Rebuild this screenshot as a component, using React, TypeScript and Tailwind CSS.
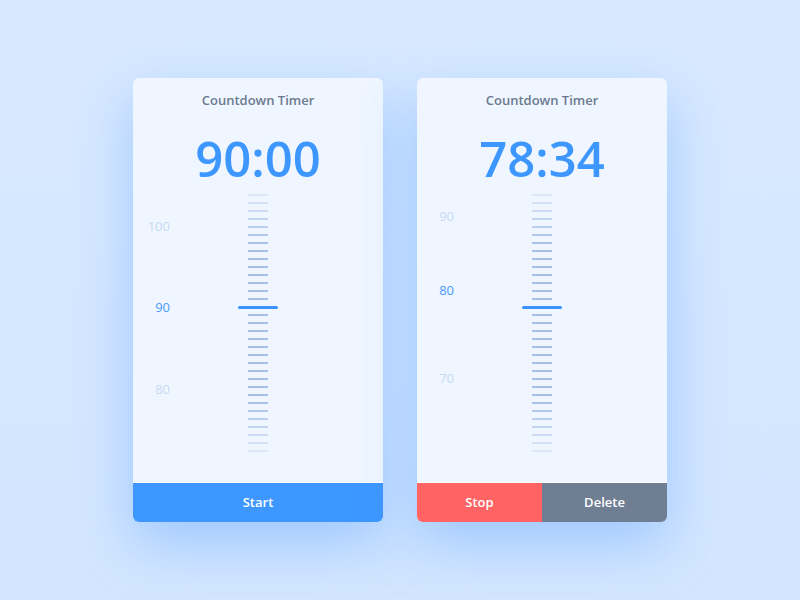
import React from "react";

type Label = { value: number; y: number; active?: boolean };

type TimerProps = {
  time: string;
  labels: Label[];
  children: React.ReactNode;
};

const TICK_COUNT = 33;
const MAJOR_INDEX = 14;
// page y where the scale begins; each tick row is 8px tall
const SCALE_TOP = 191;

function Scale({ labels }: { labels: Label[] }) {
  return (
    <div className="relative mt-[5px] h-[264px]">
      {labels.map((l) => (
        <span
          key={l.value}
          className={`absolute left-0 w-[37px] -translate-y-1/2 text-right text-[13px] leading-none ${
            l.active ? "text-[#4b9cf7]" : "text-[#c6d9f3]"
          }`}
          style={{ top: l.y - SCALE_TOP }}
        >
          {l.value}
        </span>
      ))}
      <div className="flex flex-col items-center">
        {Array.from({ length: TICK_COUNT }).map((_, i) => {
          const edge = Math.min(i, TICK_COUNT - 1 - i);
          const opacity = Math.min(1, 0.25 + edge * 0.12);
          return (
            <div key={i} className="flex h-[8px] items-center justify-center">
              {i === MAJOR_INDEX ? (
                <div className="h-[3px] w-[40px] rounded-full bg-[#3d95fb]" />
              ) : (
                <div className="h-[1.5px] w-[20px] bg-[#a4c0e6]" style={{ opacity }} />
              )}
            </div>
          );
        })}
      </div>
    </div>
  );
}

function TimerCard({ time, labels, children }: TimerProps) {
  return (
    <div className="flex h-[444px] w-[250px] flex-col overflow-hidden rounded-[6px] bg-[#eff6ff] shadow-[0_22px_55px_rgba(70,150,255,0.38)]">
      <h2 className="pt-[12px] text-center text-[13px] font-semibold leading-[20px] text-[#6c7a8f]">
        Countdown Timer
      </h2>
      <div className="mt-[20px] text-center text-[49px] font-semibold leading-[56px] text-[#3d97ff]">
        {time}
      </div>
      <Scale labels={labels} />
      <div className="flex-1" />
      <div className="flex h-[40px] border-t border-white">{children}</div>
    </div>
  );
}

export default function App() {
  return (
    <div
      className="flex h-[600px] w-[800px] justify-center gap-[34px] bg-gradient-to-b from-[#d8e9ff] to-[#d3e6ff] pt-[78px]"
      style={{ fontFamily: '"Open Sans", "Liberation Sans", sans-serif' }}
    >
      <TimerCard
        time="90:00"
        labels={[
          { value: 100, y: 226 },
          { value: 90, y: 307, active: true },
          { value: 80, y: 389 },
        ]}
      >
        <button className="flex-1 bg-[#3d97ff] text-[13px] font-semibold text-white">Start</button>
      </TimerCard>
      <TimerCard
        time="78:34"
        labels={[
          { value: 90, y: 216 },
          { value: 80, y: 290, active: true },
          { value: 70, y: 378 },
        ]}
      >
        <button className="flex-1 bg-[#ff6363] text-[13px] font-semibold text-white">Stop</button>
        <button className="flex-1 bg-[#6f7e92] text-[13px] font-semibold text-white">Delete</button>
      </TimerCard>
    </div>
  );
}
